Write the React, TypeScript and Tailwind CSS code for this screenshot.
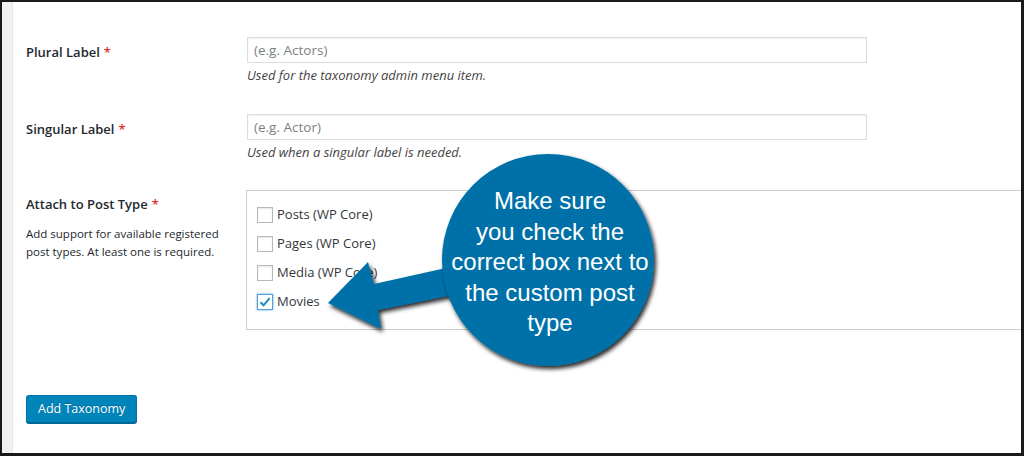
import React from 'react';

const ui = { fontFamily: '"Open Sans", "Noto Sans", sans-serif' };

function TextField({ placeholder, help }: { placeholder: string; help: string }) {
  return (
    <div className="w-[620px]">
      <div className="h-[26px] border border-[#dddddd] shadow-[inset_0_1px_2px_rgba(0,0,0,0.07)] px-[6px] flex items-center text-[13.5px] text-[#7b7f84]">
        {placeholder}
      </div>
      <p className="mt-[3px] text-[13px] leading-[18px] italic text-[#444444]">{help}</p>
    </div>
  );
}

function Required() {
  return <span className="text-[#dc3232] ml-1">*</span>;
}

function CheckRow({ label, checked }: { label: string; checked?: boolean }) {
  return (
    <div className="flex items-center h-[29px]">
      <span
        className={
          checked
            ? 'w-4 h-4 border border-[#5b9dd9] bg-white flex items-center justify-center shadow-[0_0_2px_rgba(30,140,190,0.8)]'
            : 'w-4 h-4 border border-[#b4b9be] bg-white shadow-[inset_0_1px_2px_rgba(0,0,0,0.1)]'
        }
      >
        {checked && (
          <svg width="14" height="14" viewBox="0 0 14 14">
            <path d="M2.5 7.2 L5.6 10.3 L11.6 3.2" fill="none" stroke="#1e8cbe" strokeWidth="2" />
          </svg>
        )}
      </span>
      <span className="ml-1 text-[13px] text-[#32373c]">{label}</span>
    </div>
  );
}

export default function App() {
  return (
    <div
      className="w-[1024px] h-[456px] overflow-hidden bg-white border-t-2 border-l-2 border-r-[3px] border-b-[3px] border-[#1a1a1a] flex relative"
      style={ui}
    >
      {/* admin sidebar edge */}
      <div className="w-[11px] shrink-0 bg-[#f1f1f1] border-r border-[#e5e5e5]" />

      <main className="flex-1 pl-[13px] pt-[35px] text-[#23282d]">
        {/* Plural Label */}
        <div className="flex">
          <div className="w-[221px] shrink-0 pt-[5px] text-[13px] leading-[20px] font-semibold">
            Plural Label
            <Required />
          </div>
          <TextField placeholder="(e.g. Actors)" help="Used for the taxonomy admin menu item." />
        </div>

        {/* Singular Label */}
        <div className="flex mt-[30px]">
          <div className="w-[221px] shrink-0 pt-[5px] text-[13px] leading-[20px] font-semibold">
            Singular Label
            <Required />
          </div>
          <TextField placeholder="(e.g. Actor)" help="Used when a singular label is needed." />
        </div>

        {/* Attach to Post Type */}
        <div className="flex mt-[29px]">
          <div className="w-[220px] shrink-0 pt-[4px]">
            <div className="text-[13px] leading-[20px] font-semibold">
              Attach to Post Type
              <Required />
            </div>
            <p className="mt-[11px] text-[11.5px] leading-[17.5px] text-[#23282d] w-[212px]">
              Add support for available registered post types. At least one is required.
            </p>
          </div>
          <div className="w-[800px] shrink-0 h-[140px] border border-[#cccccc] pl-[10px] pt-[9px]">
            <CheckRow label="Posts (WP Core)" />
            <CheckRow label="Pages (WP Core)" />
            <CheckRow label="Media (WP Core)" />
            <CheckRow label="Movies" checked />
          </div>
        </div>

        <button className="mt-[65px] h-[28px] px-[11px] rounded-[3px] bg-[#0085ba] border border-[#0073aa] border-b-[#006799] text-white text-[12.5px] shadow-[0_1px_0_#006799] [text-shadow:0_-1px_1px_#006799]">
          Add Taxonomy
        </button>
      </main>

      {/* callout annotation */}
      <svg className="absolute left-[-2px] top-[-2px] pointer-events-none" width="1024" height="456">
        <defs>
          <filter id="drop" x="-20%" y="-20%" width="140%" height="140%">
            <feDropShadow dx="2" dy="3" stdDeviation="2" floodColor="#000" floodOpacity="0.85" />
          </filter>
        </defs>
        <polygon
          points="328,303 368,262 374,284 455,266 458,294 378,310 381,329"
          fill="#0071a8"
          filter="url(#drop)"
        />
        <circle cx="548" cy="260" r="106" fill="#0071a8" filter="url(#drop)" />
      </svg>
      <div
        className="absolute left-[438px] top-[184px] w-[220px] text-center text-white text-[24px] leading-[30.5px] pointer-events-none"
        style={{ fontFamily: '"Liberation Sans", Arial, sans-serif' }}
      >
        Make sure
        <br />
        you check the
        <br />
        correct box next to
        <br />
        the custom post
        <br />
        type
      </div>
    </div>
  );
}
